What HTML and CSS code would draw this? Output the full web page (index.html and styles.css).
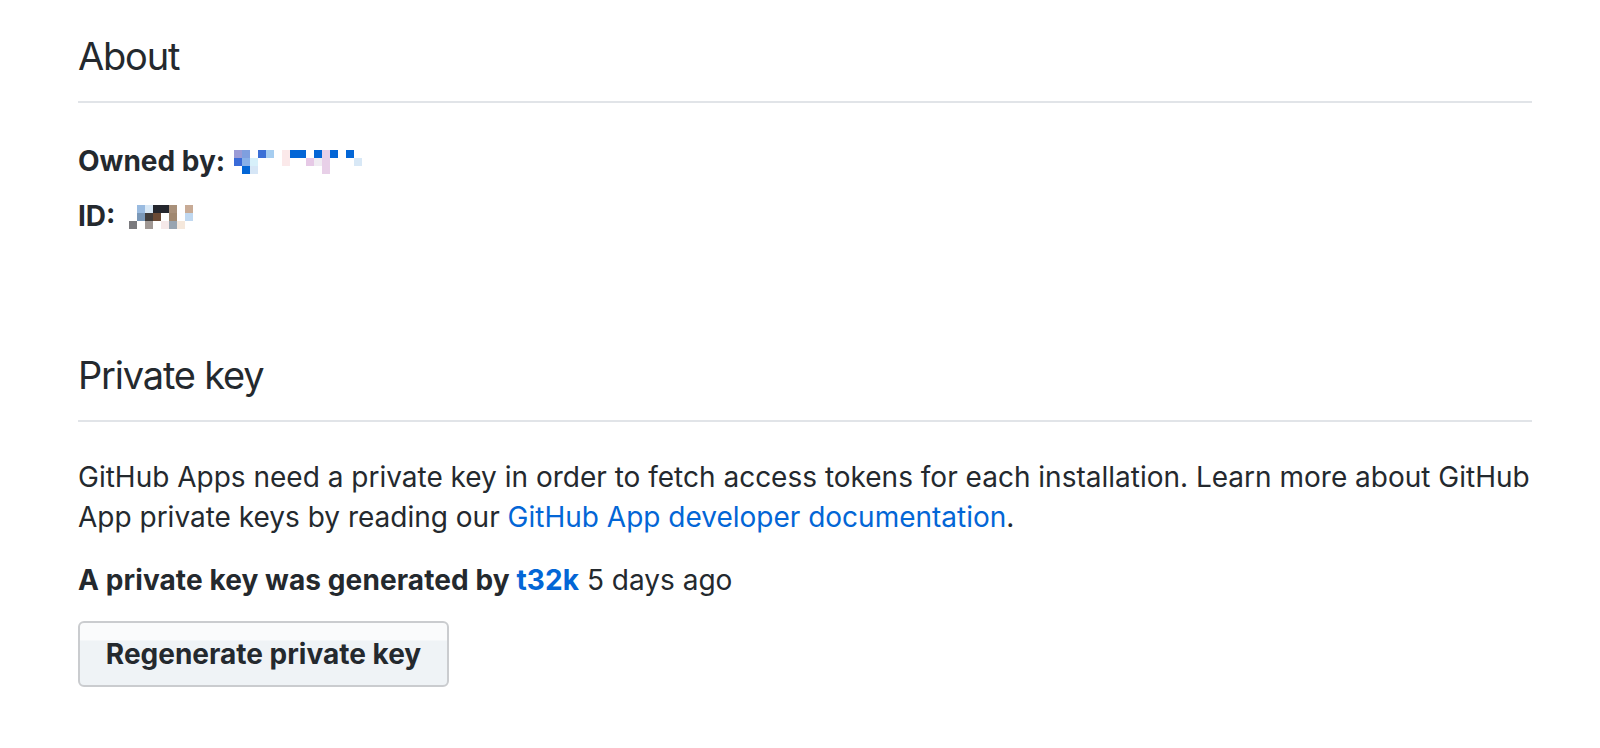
FILE: index.html
```html
<!DOCTYPE html>
<html lang="en">
<head>
<meta charset="utf-8">
<title>GitHub App settings</title>
<link rel="stylesheet" href="styles.css">
</head>
<body>
<main class="page">
  <section class="section">
    <div class="subhead"><h2 class="subhead-title">About</h2></div>
    <p class="meta meta-owner"><strong>Owned by:</strong>
      <svg class="redact redact-owner" width="128" height="24" viewBox="0 0 16 3" shape-rendering="crispEdges" aria-hidden="true">
        <rect x="0" y="0" width="1" height="1" fill="#9b9bd6"/>
        <rect x="1" y="0" width="1" height="1" fill="#7f9fdf"/>
        <rect x="3" y="0" width="1" height="1" fill="#3b6fd6"/>
        <rect x="4" y="0" width="1" height="1" fill="#a6cdf0"/>
        <rect x="6" y="0" width="1" height="2" fill="#fbe9ea"/>
        <rect x="7" y="0" width="2" height="1" fill="#0366d6"/>
        <rect x="10" y="0" width="1" height="1" fill="#0366d6"/>
        <rect x="11" y="0" width="1" height="3" fill="#e8d0e8"/>
        <rect x="12" y="0" width="1" height="1" fill="#0366d6"/>
        <rect x="14" y="0" width="1" height="1" fill="#0366d6"/>
        <rect x="0" y="1" width="1" height="1" fill="#3a6bd8"/>
        <rect x="1" y="1" width="1" height="1" fill="#88b0e8"/>
        <rect x="2" y="1" width="1" height="1" fill="#d7f0fa"/>
        <rect x="9" y="1" width="1" height="1" fill="#e6c9e6"/>
        <rect x="10" y="1" width="1" height="1" fill="#f0ecf2"/>
        <rect x="15" y="1" width="1" height="1" fill="#d8e8f6"/>
        <rect x="1" y="2" width="1" height="1" fill="#0366d6"/>
        <rect x="2" y="2" width="1" height="1" fill="#d6e6f6"/>
      </svg>
    </p>
    <p class="meta meta-id"><strong>ID:</strong>
      <svg class="redact redact-id" width="64" height="24" viewBox="0 0 8 3" shape-rendering="crispEdges" aria-hidden="true">
        <rect x="1" y="0" width="1" height="1" fill="#9abbe0"/>
        <rect x="2" y="0" width="1" height="1" fill="#d8e8f6"/>
        <rect x="3" y="0" width="2" height="1" fill="#24262d"/>
        <rect x="5" y="0" width="1" height="1" fill="#a8907a"/>
        <rect x="7" y="0" width="1" height="1" fill="#c8ab96"/>
        <rect x="1" y="1" width="1" height="1" fill="#7a98b8"/>
        <rect x="2" y="1" width="1" height="1" fill="#403c3a"/>
        <rect x="3" y="1" width="1" height="1" fill="#6a4a35"/>
        <rect x="5" y="1" width="1" height="1" fill="#a08870"/>
        <rect x="7" y="1" width="1" height="1" fill="#c0d8f0"/>
        <rect x="0" y="2" width="1" height="1" fill="#7a7a7e"/>
        <rect x="2" y="2" width="1" height="1" fill="#a09894"/>
        <rect x="4" y="2" width="1" height="1" fill="#f5e8e8"/>
        <rect x="5" y="2" width="1" height="1" fill="#98a4b0"/>
        <rect x="6" y="2" width="1" height="1" fill="#f5e8dc"/>
      </svg>
    </p>
  </section>

  <section class="section section-key">
    <div class="subhead"><h2 class="subhead-title">Private key</h2></div>
    <p class="desc">GitHub Apps need a private key in order to fetch access tokens for each installation. Learn more about GitHub App private keys by reading our <a class="link" href="#">GitHub App developer documentation</a>.</p>
    <p class="generated"><strong>A private key was generated by <a class="link" href="#">t32k</a></strong> 5 days ago</p>
    <button class="btn" type="button">Regenerate private key</button>
  </section>
</main>
</body>
</html>
```

FILE: styles.css
```css
html, body {
  margin: 0;
  padding: 0;
  background: #ffffff;
}

body {
  font-family: "Inter", "Noto Sans", sans-serif;
  color: #24292e;
  font-size: 28px;
  line-height: 40px;
}

.page {
  width: 1454px;
  padding-left: 78px;
}

.section {
  display: flex;
  flex-direction: column;
  align-items: flex-start;
}

.subhead {
  align-self: stretch;
  padding-top: 31px;
  padding-bottom: 20px;
  border-bottom: 2px solid #e1e4e8;
}

.section-key .subhead {
  padding-top: 114px;
}

.subhead-title {
  margin: 0;
  font-size: 38px;
  line-height: 50px;
  font-weight: 400;
  letter-spacing: -1.2px;
}

.meta {
  margin: 0;
  display: flex;
  align-items: center;
  gap: 9px;
}

.meta strong {
  font-weight: 700;
}

.meta-owner {
  margin-top: 38px;
}

.meta-id {
  margin-top: 15px;
  gap: 14px;
}

.redact {
  display: block;
  margin-top: 2px;
}

.desc {
  margin: 36px 0 0;
  width: 1480px;
  line-height: 39.5px;
}

.link {
  color: #0366d6;
  text-decoration: none;
}

.generated {
  margin: 23px 0 0;
}

.generated strong {
  font-weight: 700;
  letter-spacing: 0.1px;
}

.btn {
  margin-top: 21px;
  width: 371px;
  height: 66px;
  padding: 0;
  border: 2px solid #cacccf;
  border-radius: 6px;
  background: linear-gradient(180deg, #fafbfc 0, #fafbfc 17px, #eff3f6 18px, #eff3f6 100%);
  font-family: "Inter", "Noto Sans", sans-serif;
  font-size: 28px;
  font-weight: 700;
  color: #24292e;
  line-height: 34px;
}
```
